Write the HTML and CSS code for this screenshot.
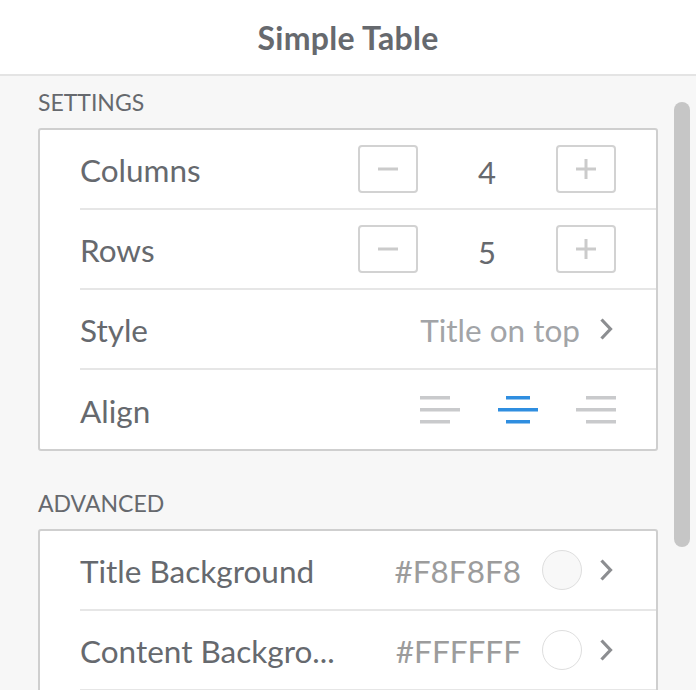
FILE: index.html
```html
<!DOCTYPE html>
<html>
<head>
<meta charset="utf-8">
<link rel="stylesheet" href="styles.css">
</head>
<body>
<div class="app">
  <header class="topbar"><h1 class="title">Simple Table</h1></header>
  <div class="main">
    <div class="content">
      <div class="section-title">SETTINGS</div>
      <div class="card">
        <div class="row">
          <span class="label">Columns</span>
          <div class="stepper">
            <span class="step-btn"><svg width="20" height="4" viewBox="0 0 20 4"><rect x="0" y="0.5" width="20" height="3" fill="#cbcbcb"/></svg></span>
            <span class="step-val">4</span>
            <span class="step-btn"><svg width="20" height="20" viewBox="0 0 20 20"><rect x="0" y="8.5" width="20" height="3" fill="#cbcbcb"/><rect x="8.5" y="0" width="3" height="20" fill="#cbcbcb"/></svg></span>
          </div>
        </div>
        <div class="row">
          <span class="label">Rows</span>
          <div class="stepper">
            <span class="step-btn"><svg width="20" height="4" viewBox="0 0 20 4"><rect x="0" y="0.5" width="20" height="3" fill="#cbcbcb"/></svg></span>
            <span class="step-val">5</span>
            <span class="step-btn"><svg width="20" height="20" viewBox="0 0 20 20"><rect x="0" y="8.5" width="20" height="3" fill="#cbcbcb"/><rect x="8.5" y="0" width="3" height="20" fill="#cbcbcb"/></svg></span>
          </div>
        </div>
        <div class="row">
          <span class="label">Style</span>
          <div class="right">
            <span class="value">Title on top</span>
            <svg class="chev" width="14" height="24" viewBox="0 0 14 24"><path d="M2.5 2.5 L11.5 12 L2.5 21.5" fill="none" stroke="#8c8e91" stroke-width="3.2"/></svg>
          </div>
        </div>
        <div class="row last">
          <span class="label">Align</span>
          <div class="aligns">
            <svg width="40" height="28" viewBox="0 0 40 28"><rect x="0" y="0" width="30" height="3.5" fill="#c9cacc"/><rect x="0" y="12" width="40" height="3.5" fill="#c9cacc"/><rect x="0" y="24" width="30" height="3.5" fill="#c9cacc"/></svg>
            <svg width="40" height="28" viewBox="0 0 40 28"><rect x="8" y="0" width="24" height="3.5" fill="#2f8ee0"/><rect x="0" y="12" width="40" height="3.5" fill="#2f8ee0"/><rect x="8" y="24" width="24" height="3.5" fill="#2f8ee0"/></svg>
            <svg width="40" height="28" viewBox="0 0 40 28"><rect x="10" y="0" width="30" height="3.5" fill="#c9cacc"/><rect x="0" y="12" width="40" height="3.5" fill="#c9cacc"/><rect x="10" y="24" width="30" height="3.5" fill="#c9cacc"/></svg>
          </div>
        </div>
      </div>
      <div class="section-title second">ADVANCED</div>
      <div class="card">
        <div class="row">
          <span class="label">Title Background</span>
          <div class="right">
            <span class="hex">#F8F8F8</span>
            <span class="swatch swatch-gray"></span>
            <svg class="chev" width="14" height="24" viewBox="0 0 14 24"><path d="M2.5 2.5 L11.5 12 L2.5 21.5" fill="none" stroke="#8c8e91" stroke-width="3.2"/></svg>
          </div>
        </div>
        <div class="row">
          <span class="label">Content Backgro...</span>
          <div class="right">
            <span class="hex">#FFFFFF</span>
            <span class="swatch swatch-white"></span>
            <svg class="chev" width="14" height="24" viewBox="0 0 14 24"><path d="M2.5 2.5 L11.5 12 L2.5 21.5" fill="none" stroke="#8c8e91" stroke-width="3.2"/></svg>
          </div>
        </div>
      </div>
    </div>
    <div class="scrollbar"></div>
  </div>
</div>
</body>
</html>
```

FILE: styles.css
```css
* { box-sizing: border-box; }
html, body { margin: 0; padding: 0; }
body {
  font-family: Lato, "Open Sans", sans-serif;
  background: #f7f7f7;
  width: 696px;
  height: 690px;
  overflow: hidden;
}
.app { width: 696px; }
.topbar {
  background: #ffffff;
  height: 76px;
  border-bottom: 2px solid #e4e4e4;
  display: flex;
  align-items: center;
  justify-content: center;
}
.title {
  margin: 0;
  font-size: 32px;
  font-weight: 700;
  color: #66696e;
  letter-spacing: 0.3px;
}
.main {
  display: flex;
  align-items: flex-start;
}
.content {
  width: 658px;
  padding-left: 38px;
}
.section-title {
  height: 52px;
  line-height: 52px;
  font-size: 23px;
  font-weight: 400;
  color: #66696e;
}
.section-title.second {
  margin-top: 26px;
  height: 52px;
}
.card {
  background: #ffffff;
  border: 2px solid #cfcfcf;
  border-radius: 3px;
  padding-left: 40px;
}
.row {
  height: 80px;
  border-bottom: 2px solid #e6e6e6;
  display: flex;
  align-items: center;
  justify-content: space-between;
  padding-right: 40px;
}
.row.last { border-bottom: none; height: 79px; }
.label {
  font-size: 31.5px;
  color: #66696e;
  padding-top: 2px;
}
.stepper {
  display: flex;
  align-items: center;
  width: 258px;
}
.step-btn {
  width: 60px;
  height: 48px;
  border: 2px solid #d2d2d2;
  border-radius: 4px;
  display: flex;
  align-items: center;
  justify-content: center;
}
.step-val {
  flex: 1;
  text-align: center;
  font-size: 31px;
  color: #66696e;
  padding-top: 5px;
}
.right {
  display: flex;
  align-items: center;
}
.value {
  font-size: 31.5px;
  color: #a2a4a7;
  margin-right: 19px;
  padding-top: 2px;
}
.chev { display: block; margin-right: 3px; }
.aligns {
  display: flex;
  align-items: center;
  gap: 38px;
}
.aligns svg { display: block; }
.hex {
  font-size: 31.5px;
  color: #9c9c9c;
  margin-right: 21px;
  padding-top: 2px;
}
.swatch {
  width: 40px;
  height: 40px;
  border-radius: 50%;
  border: 1.5px solid #dedede;
  margin-right: 17px;
}
.swatch-gray { background: #f8f8f8; }
.swatch-white { background: #ffffff; }
.scrollbar {
  width: 16px;
  height: 445px;
  margin-top: 26px;
  margin-left: 16px;
  border-radius: 8px;
  background: #c6c6c6;
}
```
